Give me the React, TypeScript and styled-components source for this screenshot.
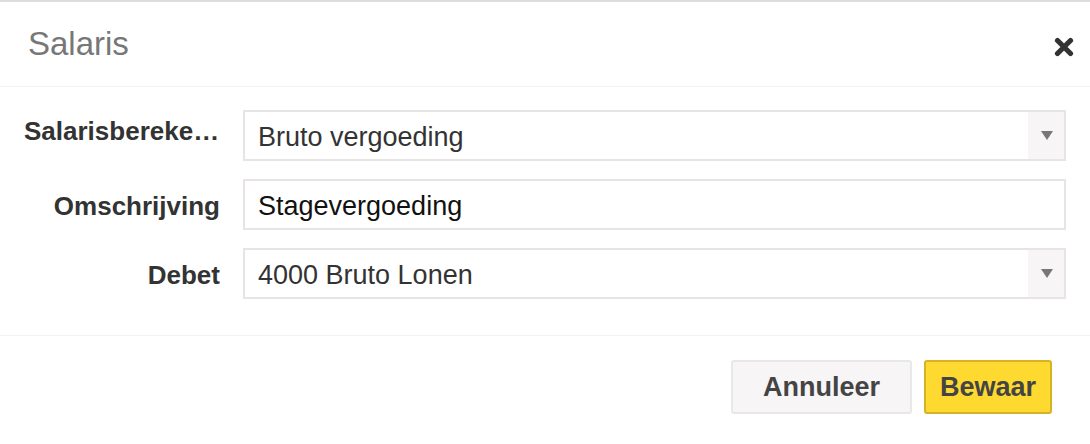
import React from "react"
import styled, {createGlobalStyle} from "styled-components"

const GlobalStyle = createGlobalStyle`
  html, body {
    margin: 0;
    padding: 0;
    background: #fff;
  }
  body {
    font-family: "Liberation Sans", Arial, Helvetica, sans-serif;
    color: #333;
  }
  * {
    box-sizing: border-box;
  }
`

type FieldType = {
    label: string
    value: string
    isSelect?: boolean
    strong?: boolean
}

const fields: FieldType[] = [
    {label: "Salarisberekening", value: "Bruto vergoeding", isSelect: true},
    {label: "Omschrijving", value: "Stagevergoeding", strong: true},
    {label: "Debet", value: "4000 Bruto Lonen", isSelect: true},
]

export default function App() {
    return (
        <>
            <GlobalStyle/>
            <Modal>
                <Header>
                    <Title>Salaris</Title>
                    <CloseButton aria-label="Sluiten">
                        <svg width="20" height="20" viewBox="0 0 20 20">
                            <path d="M3.5 3.5 L16.5 16.5 M16.5 3.5 L3.5 16.5"
                                  stroke="#333" strokeWidth="5.2" strokeLinecap="round"/>
                        </svg>
                    </CloseButton>
                </Header>
                <Body>
                    {fields.map(f => (
                        <Row key={f.label}>
                            <Label $first={f.label === "Salarisberekening"}>{f.label}</Label>
                            <Field $strong={f.strong}>
                                <FieldText>{f.value}</FieldText>
                                {f.isSelect && <Arrow><Triangle/></Arrow>}
                            </Field>
                        </Row>
                    ))}
                </Body>
                <Footer>
                    <Button $width={181}>Annuleer</Button>
                    <Button $width={128} $primary>Bewaar</Button>
                </Footer>
            </Modal>
        </>
    )
}

const Modal = styled.div`
  width: 1090px;
  border-top: 2px solid #dcdcdc;
  background: #fff;
`

//Header
const Header = styled.div`
  height: 85px;
  padding: 0 16px 0 28px;
  display: flex;
  align-items: center;
  justify-content: space-between;
  border-bottom: 1px solid #f3f3f3;
`
const Title = styled.div`
  font-size: 33px;
  color: #777;
  font-weight: normal;
`
const CloseButton = styled.div`
  width: 20px;
  height: 20px;
  display: flex;
  margin-top: 5px;
`

//Body
const Body = styled.div`
  padding: 23px 24px 36px 24px;
  display: flex;
  flex-direction: column;
  gap: 18px;
  border-bottom: 1px solid #f3f3f3;
`
const Row = styled.div`
  display: grid;
  grid-template-columns: 196px 1fr;
  column-gap: 23px;
  align-items: start;
`
const Label = styled.div<{ $first?: boolean }>`
  font-size: 26px;
  font-weight: bold;
  color: #333;
  text-align: right;
  white-space: nowrap;
  overflow: hidden;
  text-overflow: ellipsis;
  padding-top: ${p => p.$first ? "3px" : "9px"};
  line-height: 36px;
`
const Field = styled.div<{ $strong?: boolean }>`
  height: 51px;
  border: 2px solid #e8e4e4;
  display: flex;
  align-items: center;
  color: ${p => p.$strong ? "#111" : "#333"};
`
const FieldText = styled.div`
  flex: 1;
  font-size: 27px;
  padding-left: 13px;
  padding-top: 3px;
`
const Arrow = styled.div`
  width: 36px;
  align-self: stretch;
  background: #f7f5f5;
  display: flex;
  align-items: center;
  justify-content: center;
`
const Triangle = styled.div`
  width: 0;
  height: 0;
  border-left: 6px solid transparent;
  border-right: 6px solid transparent;
  border-top: 9px solid #777;
  margin-left: 2px;
`

//Footer
const Footer = styled.div`
  padding: 24px 38px 29px 0;
  display: flex;
  justify-content: flex-end;
  gap: 12px;
`
const Button = styled.div<{ $width: number, $primary?: boolean }>`
  width: ${p => p.$width}px;
  height: 54px;
  display: flex;
  align-items: center;
  justify-content: center;
  font-size: 27px;
  font-weight: bold;
  color: #444;
  border-radius: 3px;
  border: 2px solid ${p => p.$primary ? "#d6b325" : "#e8e8e8"};
  background: ${p => p.$primary ? "#fed930" : "#f7f5f6"};
`
